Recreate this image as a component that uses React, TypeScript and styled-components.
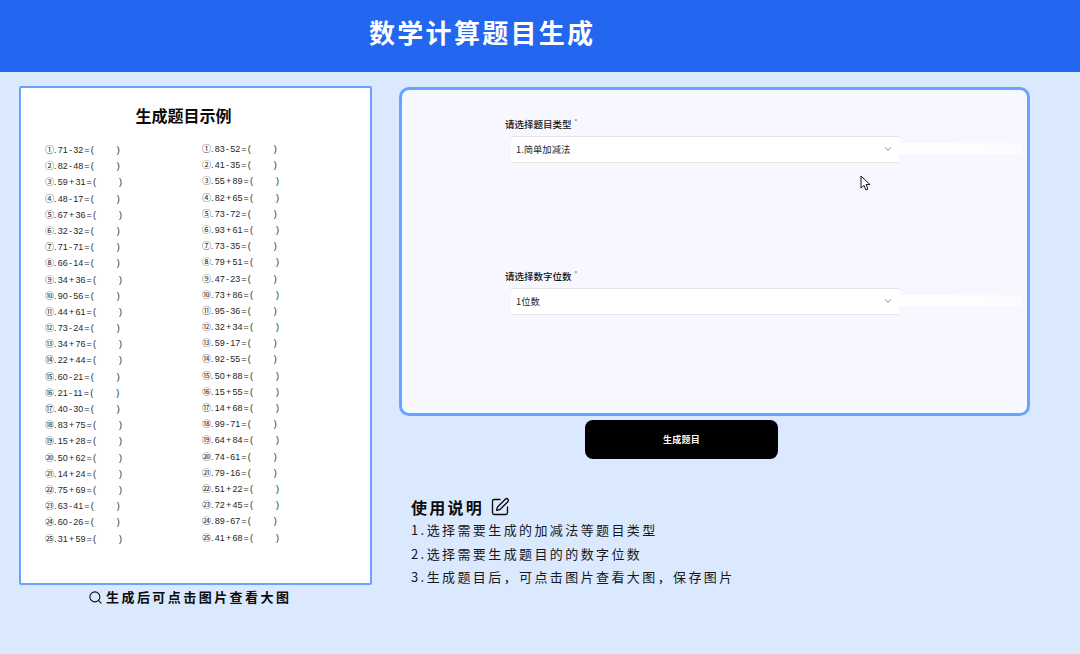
import React from 'react';
import styled, { createGlobalStyle } from 'styled-components';
import { Search, SquarePen, ChevronDown } from 'lucide-react';

const FONT = '"Noto Sans CJK SC", "Liberation Sans", sans-serif';

const GlobalStyle = createGlobalStyle`
  html, body {
    margin: 0;
    padding: 0;
    background: #dbe9fe;
  }
  body {
    font-family: ${FONT};
    overflow: hidden;
  }
`;

const Page = styled.div`
  width: 1080px;
  height: 654px;
  position: relative;
  overflow: hidden;
  background: #dbe9fe;
`;

const Header = styled.header`
  height: 72px;
  box-sizing: border-box;
  padding: 0 0 10px 369px;
  display: flex;
  align-items: center;
  background: #2366f0;
`;

const HeaderTitle = styled.h1`
  margin: 0;
  color: #fff;
  font-size: 26px;
  font-weight: 700;
  letter-spacing: 2.3px;
  white-space: nowrap;
`;

const Main = styled.main`
  display: flex;
  gap: 27px;
  padding: 14px 0 0 19px;
`;

const LeftColumn = styled.section`
  width: 353px;
  display: flex;
  flex-direction: column;
`;

const SheetCard = styled.div`
  height: 499px;
  box-sizing: border-box;
  border: 2px solid #66a5ff;
  border-radius: 2px;
  background: #fff;
  padding: 15px 0 0 24px;
`;

const SheetTitle = styled.h2`
  margin: 0 0 15px;
  width: 277px;
  text-align: center;
  color: #0b0b0b;
  font-size: 16px;
  line-height: 24px;
  font-weight: 700;
`;

const SheetGrid = styled.div`
  display: grid;
  grid-template-columns: 157px 130px;
`;

const SheetColumn = styled.div<{ $lift?: boolean }>`
  display: flex;
  flex-direction: column;
  margin-top: ${p => (p.$lift ? '-1px' : '0')};
`;

const Problem = styled.div`
  height: 16.2px;
  line-height: 16.2px;
  font-family: "Liberation Sans", "Noto Sans CJK SC", sans-serif;
  font-size: 9px;
  word-spacing: -1.3px;
  color: #1f1f1f;
  white-space: nowrap;
`;

const Blank = styled.span`
  padding-left: 23px;
`;

const Caption = styled.div`
  margin-top: 4px;
  padding-left: 69px;
  display: flex;
  align-items: center;
  gap: 3px;
  color: #0b0b0b;
  font-size: 13px;
  line-height: 16px;
  font-weight: 700;
  letter-spacing: 2.45px;
  white-space: nowrap;
`;

const RightColumn = styled.section`
  width: 631px;
  padding-top: 1px;
  display: flex;
  flex-direction: column;
`;

const FormCard = styled.div`
  height: 329px;
  box-sizing: border-box;
  border: 3px solid #66a5ff;
  border-radius: 10px;
  background: #f6f7ff;
  padding: 26px 0 0 103px;
  display: flex;
  flex-direction: column;
  gap: 105px;
`;

const Field = styled.div`
  display: flex;
  flex-direction: column;
`;

const FieldLabel = styled.label`
  height: 20px;
  line-height: 16px;
  font-size: 9.5px;
  font-weight: 500;
  color: #111;
  white-space: nowrap;
`;

const Required = styled.sup`
  margin-left: 3px;
  color: #e5484d;
  font-size: 6px;
  line-height: 0;
`;

const SelectBox = styled.div`
  position: relative;
  width: 388px;
  height: 27px;
  margin-left: 6px;
  box-sizing: border-box;
  padding: 0 6px 2px 5px;
  display: flex;
  align-items: center;
  justify-content: space-between;
  border-top: 1px solid #e4e4e7;
  border-bottom: 1px solid #e4e4e7;
  background: #fff;
  color: #27272a;
  font-size: 9.3px;
  &::after {
    content: '';
    position: absolute;
    left: 100%;
    top: 6px;
    width: 122px;
    height: 11px;
    background: linear-gradient(90deg, #fff, #fbfcff);
  }
`;

const SubmitButton = styled.button`
  width: 193px;
  height: 39px;
  margin: 4px 0 0 186px;
  border: 0;
  border-radius: 8px;
  background: #000;
  color: #fff;
  font-family: ${FONT};
  font-size: 9px;
  font-weight: 700;
  letter-spacing: 0.25px;
`;

const Usage = styled.div`
  margin: 36px 0 0 12px;
`;

const UsageTitle = styled.h3`
  margin: 0;
  display: flex;
  align-items: center;
  gap: 6px;
  height: 23px;
  color: #0b0b0b;
  font-size: 16px;
  font-weight: 700;
  letter-spacing: 2.25px;
`;

const UsageLine = styled.p`
  margin: 0;
  height: 23.5px;
  line-height: 23.5px;
  color: #18181b;
  font-size: 13px;
  letter-spacing: 2.4px;
  white-space: nowrap;
`;

const Cursor = styled.svg`
  position: absolute;
  left: 860px;
  top: 175px;
`;

const leftProblems = [
  '71 - 32', '82 - 48', '59 + 31', '48 - 17', '67 + 36', '32 - 32', '71 - 71', '66 - 14', '34 + 36',
  '90 - 56', '44 + 61', '73 - 24', '34 + 76', '22 + 44', '60 - 21', '21 - 11', '40 - 30', '83 + 75',
  '15 + 28', '50 + 62', '14 + 24', '75 + 69', '63 - 41', '60 - 26', '31 + 59',
];

const rightProblems = [
  '83 - 52', '41 - 35', '55 + 89', '82 + 65', '73 - 72', '93 + 61', '73 - 35', '79 + 51', '47 - 23',
  '73 + 86', '95 - 36', '32 + 34', '59 - 17', '92 - 55', '50 + 88', '15 + 55', '14 + 68', '99 - 71',
  '64 + 84', '74 - 61', '79 - 16', '51 + 22', '72 + 45', '89 - 67', '41 + 68',
];

const circled = '①②③④⑤⑥⑦⑧⑨⑩⑪⑫⑬⑭⑮⑯⑰⑱⑲⑳㉑㉒㉓㉔㉕';

const usageLines = [
  '1.选择需要生成的加减法等题目类型',
  '2.选择需要生成题目的的数字位数',
  '3.生成题目后，可点击图片查看大图，保存图片',
];

const ProblemList = ({ items, lift }: { items: string[]; lift?: boolean }) => (
  <SheetColumn $lift={lift}>
    {items.map((item, i) => (
      <Problem key={item + i}>
        {circled[i]}. {item} = (<Blank>)</Blank>
      </Problem>
    ))}
  </SheetColumn>
);

export default function App() {
  return (
    <Page>
      <GlobalStyle />
      <Header>
        <HeaderTitle>数学计算题目生成</HeaderTitle>
      </Header>
      <Main>
        <LeftColumn>
          <SheetCard>
            <SheetTitle>生成题目示例</SheetTitle>
            <SheetGrid>
              <ProblemList items={leftProblems} />
              <ProblemList items={rightProblems} lift />
            </SheetGrid>
          </SheetCard>
          <Caption>
            <Search size={15} strokeWidth={1.7} color="#0b0b0b" />
            生成后可点击图片查看大图
          </Caption>
        </LeftColumn>
        <RightColumn>
          <FormCard>
            <Field>
              <FieldLabel>
                请选择题目类型<Required>*</Required>
              </FieldLabel>
              <SelectBox>
                1.简单加减法
                <ChevronDown size={10} color="#71717a" />
              </SelectBox>
            </Field>
            <Field>
              <FieldLabel>
                请选择数字位数<Required>*</Required>
              </FieldLabel>
              <SelectBox>
                1位数
                <ChevronDown size={10} color="#71717a" />
              </SelectBox>
            </Field>
          </FormCard>
          <SubmitButton type="button">生成题目</SubmitButton>
          <Usage>
            <UsageTitle>
              使用说明
              <SquarePen size={20} strokeWidth={1.6} color="#0b0b0b" />
            </UsageTitle>
            {usageLines.map(line => (
              <UsageLine key={line}>{line}</UsageLine>
            ))}
          </Usage>
        </RightColumn>
      </Main>
      <Cursor width="11" height="16" viewBox="0 0 11 16">
        <path d="M1 1v12l3-2.6L6 15l2-1-2-4.4h4z" fill="#fff" stroke="#111" strokeWidth="1" strokeLinejoin="round" />
      </Cursor>
    </Page>
  );
}
